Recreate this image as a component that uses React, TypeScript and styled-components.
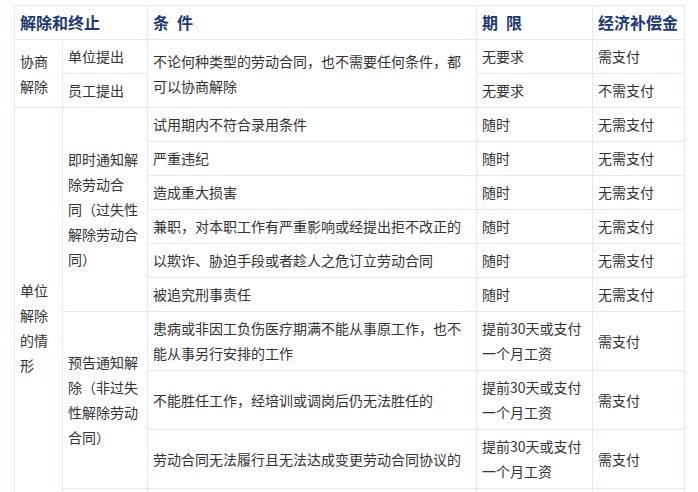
import React from "react";
import styled, { createGlobalStyle } from "styled-components";

const Global = createGlobalStyle`
  html, body {
    margin: 0;
    padding: 0;
    background: #ffffff;
  }
  body {
    font-family: "Noto Sans CJK SC", "Noto Sans", sans-serif;
  }
`;

const Page = styled.div`
  padding: 5px 0 0 14px;
  height: 487px;
  overflow: hidden;
`;

const Table = styled.table`
  border-collapse: collapse;
  table-layout: fixed;
  width: 670px;
  font-size: 14px;
  line-height: 25px;
  color: #333333;
`;

const HeadCell = styled.th`
  border: 1px solid #e1ebf5;
  padding: 4px 5px;
  text-align: left;
  vertical-align: middle;
  font-size: 16px;
  font-weight: bold;
  color: #1d3a74;
  white-space: pre;
`;

const Cell = styled.td`
  border: 1px solid #e1ebf5;
  padding: 4px 5px;
  text-align: left;
  vertical-align: middle;
  word-break: break-all;
`;

const ContinuedRow = styled.tr`
  height: 60px;
`;

type Row = { cond: string; term: string; pay: string };

const payTerm = "提前30天或支付一个月工资";

const instantRows: Row[] = [
  { cond: "试用期内不符合录用条件", term: "随时", pay: "无需支付" },
  { cond: "严重违纪", term: "随时", pay: "无需支付" },
  { cond: "造成重大损害", term: "随时", pay: "无需支付" },
  { cond: "兼职，对本职工作有严重影响或经提出拒不改正的", term: "随时", pay: "无需支付" },
  { cond: "以欺诈、胁迫手段或者趁人之危订立劳动合同", term: "随时", pay: "无需支付" },
  { cond: "被追究刑事责任", term: "随时", pay: "无需支付" },
];

const noticeRows: Row[] = [
  { cond: "患病或非因工负伤医疗期满不能从事原工作，也不能从事另行安排的工作", term: payTerm, pay: "需支付" },
  { cond: "不能胜任工作，经培训或调岗后仍无法胜任的", term: payTerm, pay: "需支付" },
  { cond: "劳动合同无法履行且无法达成变更劳动合同协议的", term: payTerm, pay: "需支付" },
];

const lines = (parts: string[]) =>
  parts.map((p, i) => (
    <React.Fragment key={i}>
      {p}
      {i < parts.length - 1 && <br />}
    </React.Fragment>
  ));

export default function App() {
  return (
    <>
      <Global />
      <Page>
        <Table>
          <colgroup>
            <col style={{ width: 48 }} />
            <col style={{ width: 85 }} />
            <col style={{ width: 329 }} />
            <col style={{ width: 116 }} />
            <col style={{ width: 92 }} />
          </colgroup>
          <tbody>
            <tr>
              <HeadCell colSpan={2}>解除和终止</HeadCell>
              <HeadCell>{"条\u2002件"}</HeadCell>
              <HeadCell>{"期\u2002限"}</HeadCell>
              <HeadCell>经济补偿金</HeadCell>
            </tr>
            <tr>
              <Cell rowSpan={2}>{lines(["协商", "解除"])}</Cell>
              <Cell>单位提出</Cell>
              <Cell rowSpan={2}>不论何种类型的劳动合同，也不需要任何条件，都可以协商解除</Cell>
              <Cell>无要求</Cell>
              <Cell>需支付</Cell>
            </tr>
            <tr>
              <Cell>员工提出</Cell>
              <Cell>无要求</Cell>
              <Cell>不需支付</Cell>
            </tr>
            {instantRows.map((r, i) => (
              <tr key={"i" + i}>
                {i === 0 && (
                  <Cell rowSpan={10}>{lines(["单位", "解除", "的情", "形"])}</Cell>
                )}
                {i === 0 && (
                  <Cell rowSpan={6}>
                    {lines(["即时通知解", "除劳动合", "同（过失性", "解除劳动合", "同）"])}
                  </Cell>
                )}
                <Cell>{r.cond}</Cell>
                <Cell>{r.term}</Cell>
                <Cell>{r.pay}</Cell>
              </tr>
            ))}
            {noticeRows.map((r, i) => (
              <tr key={"n" + i}>
                {i === 0 && (
                  <Cell rowSpan={3}>
                    {lines(["预告通知解", "除（非过失", "性解除劳动", "合同）"])}
                  </Cell>
                )}
                <Cell>{r.cond}</Cell>
                <Cell>{r.term}</Cell>
                <Cell>{r.pay}</Cell>
              </tr>
            ))}
            <ContinuedRow>
              <Cell />
              <Cell />
              <Cell />
              <Cell />
            </ContinuedRow>
          </tbody>
        </Table>
      </Page>
    </>
  );
}
